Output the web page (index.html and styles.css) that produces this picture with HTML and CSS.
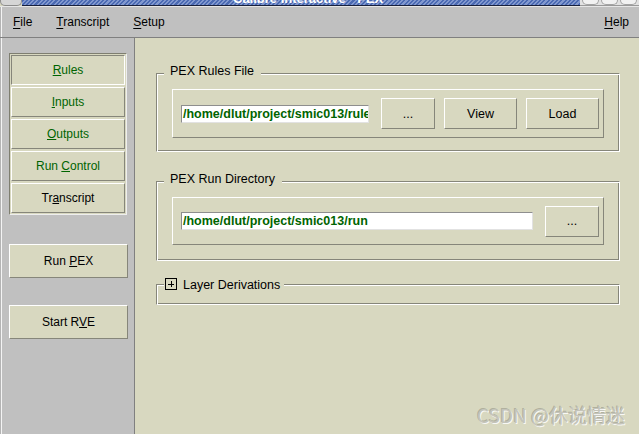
FILE: index.html
```html
<!DOCTYPE html>
<html>
<head>
<meta charset="utf-8">
<title>Calibre Interactive - PEX</title>
<link rel="stylesheet" href="styles.css">
</head>
<body>
<div class="window">
  <div class="titlebar">
    <div class="tb-menu"></div>
    <div class="tb-title"><span>Calibre Interactive - PEX</span></div>
    <div class="tb-controls"><span></span><span></span><span></span></div>
  </div>
  <div class="menubar">
    <span class="menu"><u>F</u>ile</span>
    <span class="menu"><u>T</u>ranscript</span>
    <span class="menu"><u>S</u>etup</span>
    <span class="menu help"><u>H</u>elp</span>
  </div>
  <div class="main">
    <aside class="sidebar">
      <div class="navgroup">
        <div class="navbtn active"><u>R</u>ules</div>
        <div class="navbtn"><u>I</u>nputs</div>
        <div class="navbtn"><u>O</u>utputs</div>
        <div class="navbtn">Run <u>C</u>ontrol</div>
        <div class="navbtn plain">Tr<u>a</u>nscript</div>
      </div>
      <div class="actbtn run">Run <u>P</u>EX</div>
      <div class="actbtn rve">Start R<u>V</u>E</div>
    </aside>
    <section class="content">
      <fieldset class="group group-rules">
        <legend>PEX Rules File</legend>
        <div class="panel panel-rules">
          <div class="entry entry-rules">/home/dlut/project/smic013/rules</div>
          <div class="btn small first">...</div>
          <div class="btn wide">View</div>
          <div class="btn wide">Load</div>
        </div>
      </fieldset>
      <fieldset class="group group-run">
        <legend>PEX Run Directory</legend>
        <div class="panel panel-run">
          <div class="entry entry-run">/home/dlut/project/smic013/run</div>
          <div class="btn small first">...</div>
        </div>
      </fieldset>
      <fieldset class="group group-layer">
        <legend class="legend-toggle">
          <svg class="plus" width="12" height="12" viewBox="0 0 12 12">
            <rect x="0.5" y="0.5" width="11" height="11" fill="none" stroke="#000" stroke-width="1"/>
            <path d="M3 6.5H9M6.5 3V9" stroke="#000" stroke-width="1" fill="none"/>
          </svg>
          <span class="toggle-label">Layer Derivations</span>
        </legend>
      </fieldset>
    </section>
  </div>
  <div class="watermark">CSDN @休说情迷</div>
</div>
</body>
</html>
```
FILE: styles.css
```css
* {
  box-sizing: border-box;
}

html, body {
  margin: 0;
  padding: 0;
}

body {
  width: 639px;
  height: 434px;
  overflow: hidden;
  font-family: "Liberation Sans", Arial, sans-serif;
  background: #d8d8c0;
  color: #000;
}

.window {
  position: relative;
  height: 434px;
  display: flex;
  flex-direction: column;
}

/* title bar (mostly cut off) */
.titlebar {
  height: 6px;
  flex: none;
  display: flex;
}

.tb-menu {
  width: 22px;
  background: #d6d6d6;
  border: 1px solid #8c8c8c;
  border-top: none;
  border-radius: 0 0 5px 5px;
}

.tb-title {
  flex: 1;
  overflow: hidden;
  padding-left: 211px;
  background: repeating-linear-gradient(135deg, #4a69b2 0 1.5px, #8198cf 1.5px 3px);
  border-bottom: 1px solid #18203c;
}

.tb-title span {
  display: block;
  margin-top: -8px;
  color: #fff;
  font-weight: bold;
  font-size: 13px;
  line-height: 13px;
  white-space: nowrap;
}

.tb-controls {
  width: 59px;
  display: flex;
  gap: 2px;
  padding: 0 2px;
  background: #e2e2e2;
  border-bottom: 1px solid #9a9a9a;
}

.tb-controls span {
  flex: 1;
  background: #f2f2f2;
  border: 1px solid #a4a4a4;
  border-top: none;
  border-radius: 0 0 6px 6px;
}

/* menu bar */
.menubar {
  height: 32px;
  flex: none;
  display: flex;
  align-items: center;
  gap: 24px;
  padding: 0 10px 0 13px;
  background: #c0c0c0;
  border-top: 1px solid #e6e6e6;
  border-bottom: 1px solid #808080;
  box-shadow: inset 1px 0 #b4b4b4, inset 2px 0 #f4f4f4;
  font-size: 12px;
}

.menu u {
  text-underline-offset: 2px;
}

.help {
  margin-left: auto;
}

/* main area */
.main {
  flex: 1;
  min-height: 0;
  display: flex;
}

.sidebar {
  width: 135px;
  flex: none;
  display: flex;
  flex-direction: column;
  align-items: flex-start;
  padding: 15px 0 0 9px;
  background: #c0c0c0;
  border-right: 1px solid #808080;
  box-shadow: inset 1px 0 #b4b4b4, inset 2px 0 #f4f4f4;
}

.navgroup {
  width: 118px;
  display: flex;
  flex-direction: column;
  gap: 2px;
  padding: 1px;
  background: #d8d8c0;
  border: 1px solid;
  border-color: #7e7e70 #eeeeee #eeeeee #7e7e70;
}

.navbtn {
  height: 30px;
  line-height: 28px;
  text-align: center;
  white-space: nowrap;
  border: 1px solid;
  border-color: #ffffff #86867a #86867a #ffffff;
  color: #006400;
  font-size: 12px;
}

.navbtn.active {
  border-color: #86867a #ffffff #ffffff #86867a;
}

.navbtn.plain {
  color: #000;
}

.actbtn {
  width: 119px;
  height: 34px;
  line-height: 32px;
  text-align: center;
  white-space: nowrap;
  background: #d8d8c0;
  border: 1px solid;
  border-color: #ffffff #86867a #86867a #ffffff;
  font-size: 12px;
}

.run {
  margin-top: 29px;
}

.rve {
  margin-top: 27px;
}

/* content */
.content {
  flex: 1;
  padding-top: 26px;
  background: #d8d8c0;
}

.group {
  margin: 0 19px 0 21px;
  padding: 0;
  min-width: 0;
  border: 1px solid;
  border-color: #86867a #ffffff #ffffff #86867a;
  box-shadow: inset 1px 1px 0 #ffffff, inset -1px -1px 0 #86867a;
}

.group legend {
  margin-left: 7px;
  padding: 0 7px 4px 6px;
  font-size: 12.5px;
  line-height: 15px;
  background: #d8d8c0;
}

.group-run {
  margin-top: 20px;
}

.group-layer {
  margin-top: 14px;
  padding-bottom: 10px;
}

.group .legend-toggle {
  display: flex;
  align-items: flex-start;
  gap: 6px;
  padding: 0 4px 1px 1px;
}

.plus {
  display: block;
  margin-top: 3px;
}

.toggle-label {
  padding-top: 3px;
}

.panel {
  display: flex;
  align-items: center;
  padding: 0 4px 0 8px;
  border: 1px solid;
  border-color: #ffffff #86867a #86867a #ffffff;
}

.panel-rules {
  height: 49px;
  margin: 6px 15px 13px;
}

.panel-run {
  height: 48px;
  margin: 6px 15px 15px;
}

.entry {
  height: 18px;
  padding-left: 1px;
  overflow: hidden;
  white-space: nowrap;
  background: #ffffff;
  border: 1px solid;
  border-color: #8e8e8e #e2e2e2 #e2e2e2 #8e8e8e;
  color: #006400;
  font-weight: bold;
  font-size: 12.5px;
  line-height: 16px;
}

.entry-rules {
  width: 188px;
}

.entry-run {
  width: 352px;
}

.btn {
  height: 31px;
  margin-left: 9px;
  display: flex;
  align-items: center;
  justify-content: center;
  border: 1px solid;
  border-color: #ffffff #86867a #86867a #ffffff;
  font-size: 12.5px;
}

.btn.first {
  margin-left: 12px;
}

.btn.small {
  width: 54px;
}

.btn.wide {
  width: 73px;
}

/* watermark overlay */
.watermark {
  position: absolute;
  right: 14px;
  bottom: 7px;
  font-family: "Noto Sans CJK SC", "Noto Sans", sans-serif;
  font-size: 19px;
  line-height: 24px;
  color: #c4c4ba;
  text-shadow: 1px 1px 0 rgba(255, 255, 255, 0.85), -1px -1px 0 rgba(128, 128, 118, 0.45);
}
```
